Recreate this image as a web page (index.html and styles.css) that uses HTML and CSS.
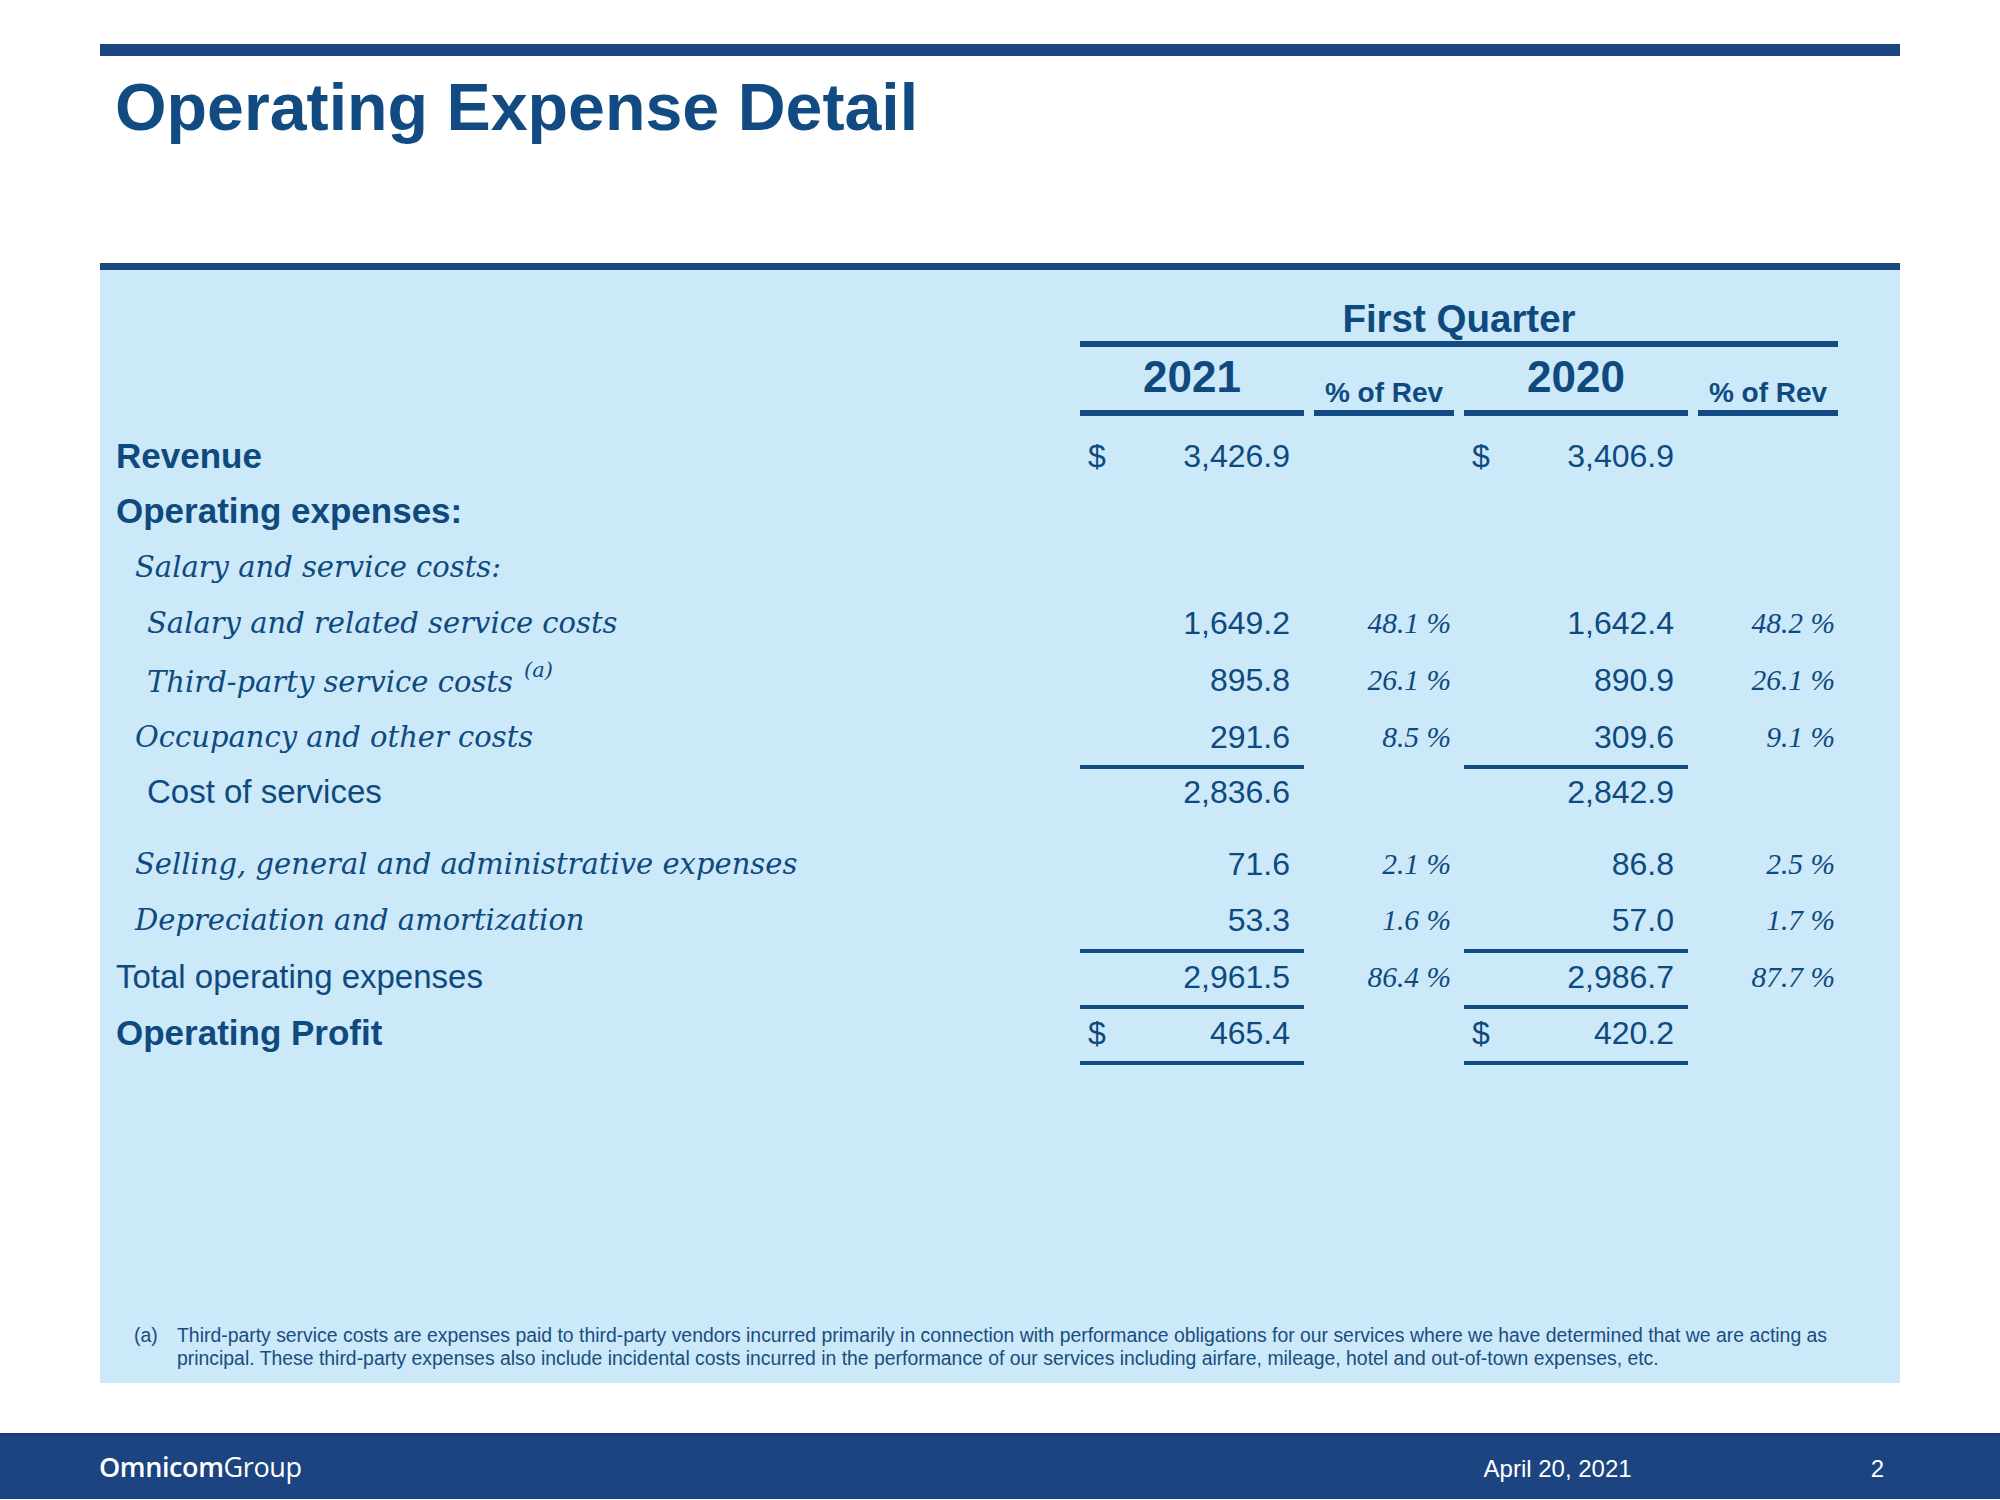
FILE: index.html
```html
<!DOCTYPE html>
<html lang="en">
<head>
<meta charset="utf-8">
<title>Operating Expense Detail</title>
<link rel="stylesheet" href="styles.css">
</head>
<body>
<div class="slide">
  <div class="topbar"></div>
  <h1 class="title">Operating Expense Detail</h1>

  <section class="panel">
    <div class="table">
      <div class="row hdr1">
        <div class="lb"></div>
        <div class="fq">First Quarter</div>
      </div>
      <div class="row hdr2">
        <div class="lb"></div>
        <div class="yr">2021</div>
        <div class="pr">% of Rev</div>
        <div class="yr">2020</div>
        <div class="pr">% of Rev</div>
      </div>

      <div class="row r1">
        <div class="lb bold in0">Revenue</div>
        <div class="v"><span>$</span><span>3,426.9</span></div>
        <div class="p"></div>
        <div class="v"><span>$</span><span>3,406.9</span></div>
        <div class="p"></div>
      </div>
      <div class="row r2">
        <div class="lb bold in0">Operating expenses:</div>
        <div class="v"></div><div class="p"></div><div class="v"></div><div class="p"></div>
      </div>
      <div class="row r3">
        <div class="lb ital in1">Salary and service costs:</div>
        <div class="v"></div><div class="p"></div><div class="v"></div><div class="p"></div>
      </div>
      <div class="row r4">
        <div class="lb ital in2">Salary and related service costs</div>
        <div class="v"><span></span><span>1,649.2</span></div>
        <div class="p">48.1&nbsp;%</div>
        <div class="v"><span></span><span>1,642.4</span></div>
        <div class="p">48.2&nbsp;%</div>
      </div>
      <div class="row r5">
        <div class="lb ital in2">Third-party service costs <sup class="fn">(a)</sup></div>
        <div class="v"><span></span><span>895.8</span></div>
        <div class="p">26.1&nbsp;%</div>
        <div class="v"><span></span><span>890.9</span></div>
        <div class="p">26.1&nbsp;%</div>
      </div>
      <div class="row r6">
        <div class="lb ital in1">Occupancy and other costs</div>
        <div class="v"><span></span><span>291.6</span></div>
        <div class="p">8.5&nbsp;%</div>
        <div class="v"><span></span><span>309.6</span></div>
        <div class="p">9.1&nbsp;%</div>
      </div>
      <div class="row r7 ruled">
        <div class="lb reg in2">Cost of services</div>
        <div class="v"><span></span><span>2,836.6</span></div>
        <div class="p"></div>
        <div class="v"><span></span><span>2,842.9</span></div>
        <div class="p"></div>
      </div>
      <div class="row r8">
        <div class="lb ital in1">Selling, general and administrative expenses</div>
        <div class="v"><span></span><span>71.6</span></div>
        <div class="p">2.1&nbsp;%</div>
        <div class="v"><span></span><span>86.8</span></div>
        <div class="p">2.5&nbsp;%</div>
      </div>
      <div class="row r9">
        <div class="lb ital in1">Depreciation and amortization</div>
        <div class="v"><span></span><span>53.3</span></div>
        <div class="p">1.6&nbsp;%</div>
        <div class="v"><span></span><span>57.0</span></div>
        <div class="p">1.7&nbsp;%</div>
      </div>
      <div class="row r10 ruled">
        <div class="lb reg in0">Total operating expenses</div>
        <div class="v"><span></span><span>2,961.5</span></div>
        <div class="p">86.4&nbsp;%</div>
        <div class="v"><span></span><span>2,986.7</span></div>
        <div class="p">87.7&nbsp;%</div>
      </div>
      <div class="row r11 ruled final">
        <div class="lb bold in0">Operating Profit</div>
        <div class="v"><span>$</span><span>465.4</span></div>
        <div class="p"></div>
        <div class="v"><span>$</span><span>420.2</span></div>
        <div class="p"></div>
      </div>
    </div>

    <div class="note">
      <span class="mark">(a)</span>
      <span class="ntext">Third-party service costs are expenses paid to third-party vendors incurred primarily in connection with performance obligations for our services where we have determined that we are acting as<br>principal. These third-party expenses also include incidental costs incurred in the performance of our services including airfare, mileage, hotel and out-of-town expenses, etc.</span>
    </div>
  </section>

  <footer class="footer">
    <div class="logo"><span class="omni">Omnicom</span><span class="group">Group</span></div>
    <div class="date">April 20, 2021</div>
    <div class="page">2</div>
  </footer>
</div>
</body>
</html>
```

FILE: styles.css
```css
* { box-sizing: content-box; }
html, body { margin: 0; padding: 0; background: #ffffff; }
.slide {
  width: 2000px;
  height: 1500px;
  position: relative;
  overflow: hidden;
  background: #ffffff;
  font-family: "Liberation Sans", Arial, sans-serif;
  color: #0f4a7f;
}
.topbar {
  margin: 44px 0 0 100px;
  width: 1800px;
  height: 12px;
  background: #1c4680;
}
.title {
  margin: 18px 0 0 115px;
  font: bold 66.3px/66px "Liberation Sans", Arial, sans-serif;
  color: #124b82;
  height: 66px;
}
.panel {
  margin: 123px 0 0 100px;
  width: 1800px;
  height: 1086px;
  padding: 27px 0 0 0;
  border-top: 7px solid #1c4680;
  background: #cbe9f8;
  display: flex;
  flex-direction: column;
}
.table { display: flex; flex-direction: column; }
.row {
  display: grid;
  grid-template-columns: 970px 224px 140px 224px 140px;
  column-gap: 10px;
  margin-top: 16px;
}
.row > div {
  height: 40px;
  line-height: 40px;
  white-space: nowrap;
}
.hdr1 { margin-top: 0; }
.hdr1 .fq {
  grid-column: 2 / 6;
  text-align: center;
  font: bold 38.5px/44px "Liberation Sans", Arial, sans-serif;
  height: 44px;
  border-bottom: 6px solid #124b82;
}
.hdr2 { margin-top: 0; align-items: end; }
.hdr2 > div { height: auto; }
.hdr2 .lb { height: 1px; }
.hdr2 .yr {
  text-align: center;
  font: bold 44px/44px "Liberation Sans", Arial, sans-serif;
  padding: 8px 0 11px;
  border-bottom: 6px solid #124b82;
}
.hdr2 .pr {
  text-align: center;
  font: bold 28px/28px "Liberation Sans", Arial, sans-serif;
  padding-bottom: 3px;
  border-bottom: 6px solid #124b82;
}
.lb.bold { font: bold 35px/40px "Liberation Sans", Arial, sans-serif; }
.lb.reg { font: 33px/40px "Liberation Sans", Arial, sans-serif; }
.lb.ital { font: italic 29px/40px "DejaVu Serif", "Liberation Serif", serif; }
.in0 { padding-left: 16px; }
.in1 { padding-left: 35px; }
.in2 { padding-left: 47px; }
.fn {
  font: italic 21px/1 "DejaVu Serif", "Liberation Serif", serif;
  vertical-align: 15px;
  margin-left: 2px;
}
.v {
  display: flex;
  justify-content: space-between;
  padding: 0 14px 0 8px;
  font: 32px/40px "Liberation Sans", Arial, sans-serif;
}
.p {
  text-align: right;
  padding-right: 3px;
  font: italic 29.5px/40px "Liberation Serif", "Times New Roman", serif;
}
.r1 { margin-top: 20px; }
.r2 { margin-top: 15px; }
.r3 { margin-top: 16px; }
.r4 { margin-top: 16px; }
.r5, .r6 { margin-top: 17px; }
.r7 { margin-top: 8px; }
.r8 { margin-top: 32px; }
.r9 { margin-top: 16px; }
.r10 { margin-top: 9px; }
.r11 { margin-top: 8px; }
.ruled > div { border-top: 4px solid transparent; padding-top: 4px; }
.r7 > div { padding-top: 3px; }
.ruled > .v { border-top-color: #124b82; }
.final > div { border-bottom: 4px solid transparent; padding-bottom: 8px; }
.final > .v { border-bottom-color: #124b82; }

.note {
  margin-top: auto;
  margin-bottom: 13px;
  padding-left: 34px;
  display: grid;
  grid-template-columns: 43px 1700px;
  font: 19.4px/23px "Liberation Sans", Arial, sans-serif;
  color: #1a4d80;
  white-space: nowrap;
}

.footer {
  margin-top: 50px;
  height: 47px;
  border-top: 3px solid #173d74;
  padding: 16px 116px 0 99px;
  background: #1b4480;
  color: #ffffff;
  display: flex;
  align-items: baseline;
}
.logo {
  font: 27px/30px "Open Sans", "Noto Sans", sans-serif;
  letter-spacing: -0.4px;
}
.omni { font-weight: 600; }
.group { font-weight: 400; }
.date {
  margin-left: auto;
  font: 24px/30px "Liberation Sans", Arial, sans-serif;
}
.page {
  margin-left: 239px;
  font: 24px/30px "Liberation Sans", Arial, sans-serif;
}
```
